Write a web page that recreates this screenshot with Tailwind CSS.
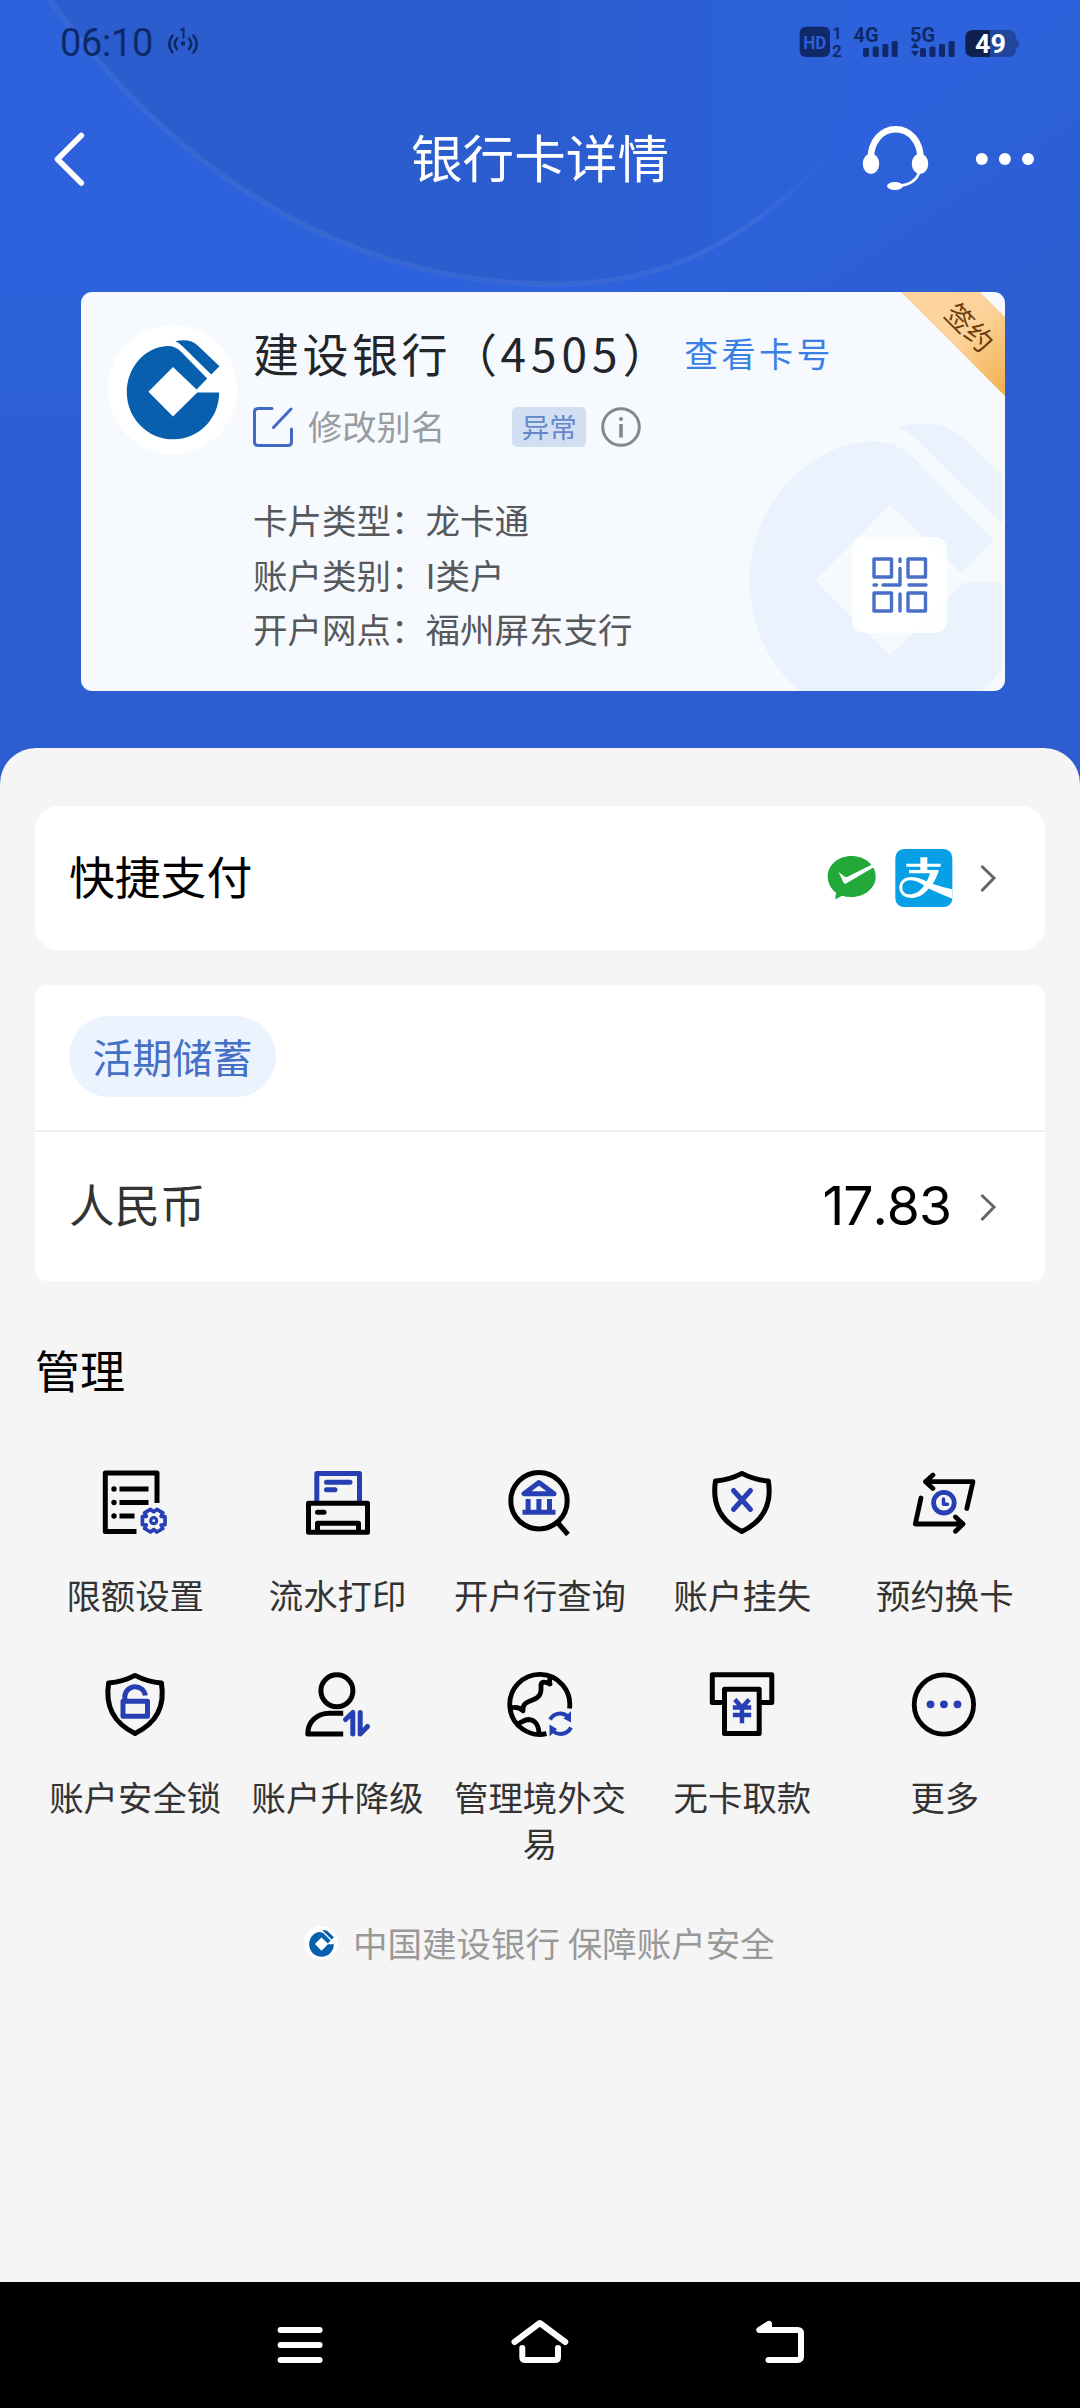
<!DOCTYPE html>
<html lang="zh-CN">
<head>
<meta charset="utf-8">
<title>银行卡详情</title>
<script src="https://cdn.jsdelivr.net/npm/@tailwindcss/browser@4"></script>
</head>
<body class="w-[1080px] h-[2408px] overflow-hidden font-['Noto_Sans_CJK_SC',sans-serif]">
<svg class="hidden">
  <symbol id="ccb" viewBox="196 206 282 304">
    <path d="M476 367H410L337 439L263 365L337 290L408 358L440 325L362 245Q345 227 320 227C252 230 198 292 198 366C198 444 260 508 338 508C414 508 476 446 476 367Z"/>
    <path d="M344 213C370 206 395 209 412 226L477 288L452 313L368 230Q358 218 344 213Z"/>
  </symbol>
</svg>
<div class="relative flex flex-col w-[1080px] h-[2408px] bg-[#2c5fd3]">
  <svg class="absolute left-0 top-0" width="1080" height="800" viewBox="0 0 1080 800">
    <defs>
      <linearGradient id="bg" x1="0" y1="0" x2="0" y2="1"><stop offset="0" stop-color="#2d62dc"/><stop offset=".35" stop-color="#2d62dc"/><stop offset=".7" stop-color="#2c5dd1"/><stop offset="1" stop-color="#2c5dd1"/></linearGradient>
      <linearGradient id="disc" x1="0" y1="0" x2="1" y2="0"><stop offset="0" stop-color="#2b5dcf"/><stop offset=".6" stop-color="#2b5dcf"/><stop offset="1" stop-color="#2d62dc"/></linearGradient>
      <linearGradient id="rightShade" gradientUnits="userSpaceOnUse" x1="860" y1="130" x2="990" y2="330"><stop offset="0" stop-color="#2c5dd1" stop-opacity="0"/><stop offset="1" stop-color="#2c5dd1"/></linearGradient>
      <linearGradient id="rim" x1="0" y1="0" x2="1" y2="0"><stop offset="0" stop-color="#fff" stop-opacity=".06"/><stop offset=".9" stop-color="#fff" stop-opacity=".06"/><stop offset="1" stop-color="#fff" stop-opacity="0"/></linearGradient>
    </defs>
    <rect width="1080" height="800" fill="url(#bg)"/>
    <rect x="540" y="0" width="540" height="800" fill="url(#rightShade)"/>
    <path d="M48 0C180 180 350 286 555 286C660 286 740 250 830 155L870 0Z" fill="url(#disc)"/>
    <path d="M50 0C182 180 352 284 555 284C660 284 740 248 830 155" fill="none" stroke="url(#rim)" stroke-width="5"/>
  </svg>

  <!-- status bar -->
  <div class="relative flex items-center justify-between h-[84px] pl-[59px] pr-[60px]">
    <div class="flex items-center gap-[13px] text-[#0d2a68]">
      <span class="mt-[2px] ml-[1px] font-[Roboto] text-[38px] leading-[40px] tracking-[-0.3px]">06:10</span>
      <svg width="34" height="32" viewBox="166 27 34 32" fill="none" stroke="#0d2a68" stroke-width="2.6" stroke-linecap="round">
        <circle cx="183" cy="44.5" r="2.3" fill="#0d2a68" stroke="none"/>
        <path d="M181 31L183.500 29.500V39" stroke-width="2"/>
        <path d="M177 39.500Q172.500 44.500 177 50M189 39.500Q193.500 44.500 189 50M172.500 36.500Q166 45 172.500 53.500M193.500 36.500Q200 45 193.500 53.500"/>
      </svg>
    </div>
    <div class="flex items-center">
      <svg width="222" height="36" viewBox="799 24 222 36" fill="#10296a">
        <rect x="800.700" y="26.700" width="30.300" height="30.300" rx="6"/>
        <text x="815.800" y="49" text-anchor="middle" textLength="23" lengthAdjust="spacingAndGlyphs" font-family="Roboto" font-weight="700" font-size="19" fill="#2c60d8">HD</text>
        <text x="838" y="39" text-anchor="middle" font-family="Roboto" font-weight="700" font-size="16">1</text>
        <text x="838" y="57" text-anchor="middle" font-family="Roboto" font-weight="700" font-size="17">2</text>
        <text x="854.500" y="41.500" textLength="25" lengthAdjust="spacingAndGlyphs" font-family="Roboto" font-weight="700" font-size="20">4G</text>
        <rect x="864" y="48" width="6" height="9" rx="1.500"/><rect x="873.700" y="46.500" width="6" height="10.500" rx="1.500"/><rect x="883.300" y="44" width="6" height="13" rx="1.500"/><rect x="892.700" y="41" width="6" height="16" rx="1.500"/>
        <text x="911" y="41.500" textLength="25" lengthAdjust="spacingAndGlyphs" font-family="Roboto" font-weight="700" font-size="20">5G</text>
        <path d="M916 42.500L920 48H912ZM916 56.500L920 51H912Z"/>
        <rect x="921" y="48" width="6" height="9" rx="1.500"/><rect x="930.500" y="46.500" width="6" height="10.500" rx="1.500"/><rect x="940" y="44" width="6" height="13" rx="1.500"/><rect x="949.700" y="41" width="6" height="16" rx="1.500"/>
        <path d="M991 30H1009Q1017 30 1017 38V39Q1020 39.500 1020 43.500Q1020 47.500 1017 48V49Q1017 57 1009 57H991Z" fill="#21469c"/>
        <path d="M991 30V57H974Q966.300 57 966.300 49V38Q966.300 30 974 30Z" fill="#0e2050"/>
        <text x="991.500" y="52.800" text-anchor="middle" textLength="31" lengthAdjust="spacingAndGlyphs" font-family="Roboto" font-weight="700" font-size="25.500" fill="#fff">49</text>
      </svg>
    </div>
  </div>

  <!-- title bar -->
  <div class="relative flex items-center justify-between h-[150px] px-[46px]">
    <svg width="180" height="70" viewBox="46 124 180 70" fill="none" stroke="#fff" stroke-width="5.600" stroke-linecap="round" stroke-linejoin="round"><path d="M81.300 135.500L57.500 159.300L81.300 183"/></svg>
    <h1 class="mb-[6px] text-white text-[51.600px] leading-[60px]">银行卡详情</h1>
    <svg width="180" height="70" viewBox="854 124 180 70" fill="#fff">
      <path d="M870.800 158C871 142 881 129.200 895.700 129.200S920.300 142 920.500 158" fill="none" stroke="#fff" stroke-width="6.500"/>
      <ellipse cx="871" cy="163.700" rx="8.200" ry="10.200"/><ellipse cx="920" cy="163.700" rx="8.200" ry="10.200"/>
      <path d="M919 173Q915 184 900 185.700" fill="none" stroke="#fff" stroke-width="2.500"/>
      <ellipse cx="895" cy="186" rx="8" ry="4"/>
      <circle cx="981.800" cy="159" r="6"/><circle cx="1004.900" cy="159" r="6"/><circle cx="1028" cy="159" r="6"/>
    </svg>
  </div>

  <!-- bank card -->
  <section class="relative mt-[58px] w-[924px] h-[399px] ml-[81px] rounded-[11px] overflow-hidden bg-[#f6faff] flex">
    <div class="absolute inset-y-0 left-0 w-[921px] overflow-hidden">
      <svg class="absolute left-[666px] top-[128px] fill-[#eaf2fd]" width="286" height="307"><use href="#ccb"/></svg>
    </div>
    <svg class="absolute right-0 top-0" width="104" height="104" viewBox="0 0 104 104">
      <defs><linearGradient id="gold" x1="0" y1="0" x2="1" y2="1"><stop offset="0" stop-color="#fdd3a0"/><stop offset=".5" stop-color="#fdd39c"/><stop offset="1" stop-color="#f2b04c"/></linearGradient></defs>
      <path d="M0 0H79L104 25V104Z" fill="url(#gold)"/>
      <text transform="translate(67.500 36.500) rotate(45)" text-anchor="middle" y="9" font-size="27.500" fill="#6a3d0c">签约</text>
    </svg>
    <div class="mt-[33px] ml-[27px] size-[129px] shrink-0 rounded-full bg-white flex items-center justify-center">
      <svg class="fill-[#085fae]" width="94" height="101"><use href="#ccb"/></svg>
    </div>
    <div class="ml-[16px] pt-[37px] flex flex-col">
      <div class="flex items-center h-[50px] whitespace-nowrap">
        <span class="mb-[5px] text-[46px] leading-[50px] tracking-[3.500px] text-[#222529]">建设银行（<span class="tracking-[5px]">4505</span>）</span>
        <span class="mb-[2px] ml-[12px] text-[34px] leading-[50px] tracking-[3.500px] text-[#3b7fe6]">查看卡号</span>
      </div>
      <div class="mt-[28px] flex items-center h-[40px]">
        <svg class="-ml-[1px]" width="42" height="42" viewBox="0 0 42 42" fill="none" stroke="#416ac8" stroke-width="3" stroke-linecap="round"><path d="M20 2.500H6Q2.500 2.500 2.500 6V36Q2.500 39.500 6 39.500H36Q39.500 39.500 39.500 36V23M21.500 21.500L39 3"/></svg>
        <span class="mb-[5px] ml-[14px] text-[34.300px] leading-[40px] text-[#999c9f]">修改别名</span>
        <span class="ml-[67px] w-[74px] h-[40px] rounded-[5px] bg-[#d2dff3] text-[27.500px] leading-[38px] text-center text-[#6387c8]">异常</span>
        <svg class="ml-[15px]" width="40" height="40" viewBox="0 0 40 40" fill="none" stroke="#85878a" stroke-width="3"><circle cx="20" cy="20" r="18.300"/><path d="M20 17V30.500" stroke-width="3.600"/><circle cx="20" cy="12" r="2" fill="#85878a" stroke="none"/></svg>
      </div>
      <div class="mt-[45px] text-[34.500px] leading-[54.500px] text-[#56585b] whitespace-nowrap">
        <p>卡片类型：龙卡通</p>
        <p>账户类别：I类户</p>
        <p>开户网点：福州屏东支行</p>
      </div>
    </div>
    <div class="absolute left-[771px] top-[245px] w-[95px] h-[96px] rounded-[12px] bg-white/90 flex items-center justify-center">
      <svg width="56" height="56" viewBox="0 0 56 56" fill="none" stroke="#4a6fc8" stroke-width="3.400" stroke-linecap="round" stroke-linejoin="round">
        <rect x="2" y="2" width="17.500" height="18"/><rect x="36" y="2" width="17.500" height="18"/><rect x="2" y="36" width="17.500" height="18"/><rect x="36" y="36" width="17.500" height="18"/>
        <path d="M28 2V4.500M28 11.500V28H11M2 28H4.500M37 28H54M28 37V54"/>
      </svg>
    </div>
  </section>

  <!-- content sheet -->
  <main class="relative mt-[57px] h-[1534px] rounded-t-[36px] bg-[#f5f5f5] px-[35px] pt-[58px] flex flex-col">
    <section class="h-[144px] shrink-0 rounded-[24px] bg-white pl-[34px] pr-[46px] flex items-center justify-between">
      <span class="mb-[7px] text-[45.800px] leading-[60px] text-black">快捷支付</span>
      <div class="flex items-center">
        <svg width="50" height="60" viewBox="827 848 50 60">
          <path d="M852.500 856C866 856 876.700 865 876.700 876.500S866 897 852.500 897Q847 897 843 895.800Q839 898 836.500 899.300Q835.800 898 837.300 893C832 889 828.700 883 828.700 876.500C828.700 865 839 856 852.500 856Z" fill="#23a93a"/>
          <path d="M839.500 872Q843 874.500 845.500 876.500Q847 877.500 849 876.500L874 864L876 866.500L847 883.500Q845.500 884.300 844.500 882.500Z" fill="#fff"/>
        </svg>
        <svg class="ml-[19px]" width="58" height="58" viewBox="408 207 172 174">
          <rect x="408" y="207" width="171" height="174" rx="26" fill="#07a0e6"/>
          <path d="M483 232H504V277H483ZM441 251H544V260H441ZM449 270H537V280H449Z" fill="#fff"/>
          <path d="M514 272H538C532 293 522 312 509 325C497 340 480 354 458 354C436 354 420 343 420 322C420 302 436 291 456 291C476 291 494 300 515 310Q545 321 579 328V356Q545 343 506 325C488 313 474 301 454 301C438 301 429 309 429 323C429 337 440 344 456 343C476 341 488 327 499 310Q508 295 514 272Z" fill="#fff"/>
        </svg>
        <svg class="ml-[26px]" width="20" height="30" viewBox="0 0 20 30" fill="none" stroke="#666" stroke-width="3"><path d="M2.500 3L15 15L2.500 28"/></svg>
      </div>
    </section>
    <section class="mt-[35px] h-[296px] shrink-0 rounded-[12px] bg-white">
      <div class="h-[147px] pl-[34px] pt-[31px] border-b-2 border-[#efefef]">
        <div class="w-[207px] h-[81px] rounded-full bg-[#ebf3fe] text-center text-[40px] leading-[80px] text-[#4470c6]">活期储蓄</div>
      </div>
      <div class="h-[149px] pl-[34px] pr-[46px] flex items-center justify-between">
        <span class="mb-[8px] text-[45.500px] leading-[60px] text-[#333]">人民币</span>
        <div class="flex items-center">
          <span class="mb-[2px] font-[Inter] text-[53.500px] leading-[60px] tracking-[-1px] [font-kerning:none] text-black">17.83</span>
          <svg class="ml-[28px]" width="20" height="30" viewBox="0 0 20 30" fill="none" stroke="#666" stroke-width="3"><path d="M2.500 3L15 15L2.500 28"/></svg>
        </div>
      </div>
    </section>
    <h2 class="mt-[59px] text-[45px] leading-[60px] text-black">管理</h2>
    <div class="mt-[64px] -mx-[1px] grid grid-cols-5 auto-rows-[202px] text-center text-[34.400px] leading-[46px] text-[#333] [&>div]:flex [&>div]:flex-col [&>div]:items-center [&_span]:mt-[31px] [&_span]:w-[180px]">
      <div>
        <svg width="76" height="76" viewBox="97.500 1464 76 76" fill="none" stroke="#000" stroke-width="5" stroke-linejoin="round">
          <path d="M157.500 1503V1473H105.800V1531.500H137M120 1489H149M120 1502.500H149M120 1516H135"/>
          <g fill="#000" stroke="none"><circle cx="114.500" cy="1489" r="2.700"/><circle cx="114.500" cy="1502.500" r="2.700"/><circle cx="114.500" cy="1516" r="2.700"/></g>
          <g transform="translate(154.200 1520.700)" stroke="#2640b4" stroke-width="3.700"><path d="M11.300 4L7.400 4.300L9.100 7.800L3.200 11.300L0 8.900L-3.200 11.300L-9.100 7.800L-7.400 4.300L-11.300 4V-4L-7.400 -4.300L-9.100 -7.800L-3.200 -11.300L0 -8.900L3.200 -11.300L9.100 -7.800L7.400 -4.300L11.300 -4Z"/><circle r="3" stroke-width="3.200"/></g>
        </svg>
        <span>限额设置</span>
      </div>
      <div>
        <svg width="76" height="76" viewBox="299.500 1464 76 76" fill="none" stroke="#000" stroke-width="5" stroke-linejoin="round">
          <path d="M316.300 1502V1473.500H359V1502M326 1482.300H349.500M326 1489.700H334.500" stroke="#2640b4" stroke-linecap="round"/>
          <path d="M308 1503.200H367V1532.200H308ZM317 1532V1523.200H358V1532"/><path d="M317 1512.300H323.500" stroke-linecap="round"/>
        </svg>
        <span>流水打印</span>
      </div>
      <div>
        <svg width="76" height="76" viewBox="501.500 1464 76 76" fill="none" stroke="#000" stroke-width="5" stroke-linejoin="round">
          <circle cx="538.500" cy="1500.700" r="28.200"/><path d="M557 1522.500L567.500 1534.500"/>
          <path d="M538.400 1482.500L523.500 1493.800H553.500Z" stroke="#2640b4"/><path d="M527.600 1499V1512M538.400 1499V1512M549 1499V1512M522 1512.300H555" stroke="#2640b4"/>
        </svg>
        <span>开户行查询</span>
      </div>
      <div>
        <svg width="76" height="76" viewBox="704.500 1464 76 76" fill="none" stroke="#000" stroke-width="5" stroke-linejoin="round">
          <path id="shield" d="M742.400 1473.400Q730 1480 716 1481C713 1500 717 1519 742.400 1531.500C768 1519 772 1500 768.800 1481Q755 1480 742.400 1473.400Z"/>
          <path d="M734 1490.500L751 1509.500M751 1490.500L734 1509.500" stroke="#2640b4" stroke-linecap="round"/>
        </svg>
        <span>账户挂失</span>
      </div>
      <div>
        <svg width="76" height="76" viewBox="907.500 1464 76 76" fill="none" stroke="#000" stroke-width="4.800" stroke-linejoin="round" stroke-linecap="round">
          <path d="M933.400 1475L926 1481.700L933.400 1488.500M926 1481.700H973.500L967.300 1508.500M921.500 1498L915.800 1524H963.500M956 1517L963.500 1524L956 1531.300"/>
          <circle cx="944.400" cy="1502.700" r="10.300" stroke="#2640b4"/><path d="M944 1499V1504.300H948" stroke="#2640b4" stroke-width="3.500"/>
        </svg>
        <span>预约换卡</span>
      </div>
      <div>
        <svg width="76" height="76" viewBox="97.500 1666 76 76" fill="none" stroke="#000" stroke-width="5" stroke-linejoin="round">
          <use href="#shield" x="-606.900" y="202"/>
          <path d="M123.500 1701.300H148V1716.300H123.500ZM125.300 1701V1697A10.300 10.300 0 0 1 145.800 1695.500" stroke="#2640b4"/>
        </svg>
        <span>账户安全锁</span>
      </div>
      <div>
        <svg width="76" height="76" viewBox="299.500 1666 76 76" fill="none" stroke="#000" stroke-width="5" stroke-linejoin="round">
          <circle cx="336.400" cy="1690.800" r="16"/><path d="M342.700 1713.300H329C316 1713.300 307.300 1722 307.300 1734H342.700"/>
          <path d="M345 1719.500L352.300 1712.500V1734M359.700 1712.500V1734L367 1726.500" stroke="#2640b4" stroke-linecap="round"/>
        </svg>
        <span>账户升降级</span>
      </div>
      <div>
        <svg width="76" height="76" viewBox="501.500 1666 76 76" fill="none" stroke="#000" stroke-width="4.800" stroke-linejoin="round">
          <path d="M569 1708.500A30 30 0 1 0 546 1733.700"/>
          <path d="M551 1677Q548 1679 549.500 1684Q541 1680 540.500 1685C541 1693 540 1697 532 1700C524 1703 522 1705 522.500 1711Q518 1706 510 1708M516 1724C520 1723 523 1720 528 1719.500C536 1720 538 1726 538.700 1734"/>
          <path d="M549.500 1719.500Q553 1713.500 560 1713.500Q564 1713.500 568 1717M570.500 1727.500Q567 1734 560 1734Q556 1734 552 1731" stroke="#2640b4" stroke-width="4"/>
          <path d="M570.500 1711V1722.500L563 1718.500ZM549 1736.500V1724.500L556.500 1729Z" fill="#2640b4" stroke="none"/>
        </svg>
        <span>管理境外交易</span>
      </div>
      <div>
        <svg width="76" height="76" viewBox="704.500 1666 76 76" fill="none" stroke="#000" stroke-width="5" stroke-linejoin="round">
          <path d="M724 1702.500H712.800V1674.800H772.300V1702.500H761M725 1689.200H759.700V1733.500H725Z"/>
          <path d="M735.300 1699.500L742.500 1707.500L749.700 1699.500M742.500 1707V1723.300M733.300 1707.500H751.700M733.300 1715H751.700" stroke="#2640b4" stroke-width="4.400"/>
        </svg>
        <span>无卡取款</span>
      </div>
      <div>
        <svg width="76" height="76" viewBox="907.500 1666 76 76" fill="none" stroke="#000" stroke-width="4.800">
          <circle cx="944.400" cy="1704.500" r="29.700"/>
          <g fill="#2640b4" stroke="none"><circle cx="931" cy="1704.300" r="3.900"/><circle cx="944.400" cy="1704.300" r="3.900"/><circle cx="958" cy="1704.300" r="3.900"/></g>
        </svg>
        <span>更多</span>
      </div>
    </div>
    <div class="mt-[51px] pl-[269px] flex items-center h-[48px]">
      <span class="size-[34px] rounded-full bg-white flex items-center justify-center"><svg class="fill-[#085fae]" width="25" height="27"><use href="#ccb"/></svg></span>
      <span class="mb-[3px] ml-[15px] text-[34.500px] leading-[48px] text-[#999]">中国建设银行 保障账户安全</span>
    </div>
  </main>

  <!-- system navigation -->
  <nav class="relative h-[126px] shrink-0 bg-black flex items-center justify-center gap-[180px]">
    <svg width="60" height="60" viewBox="270 2315 60 60" fill="none" stroke="#fff" stroke-width="6" stroke-linecap="round"><path d="M280.600 2330H319.600M280.600 2345H319.600M280.600 2360H319.600"/></svg>
    <svg width="60" height="60" viewBox="510 2315 60 60" fill="none" stroke="#fff" stroke-width="6" stroke-linecap="round" stroke-linejoin="round"><path d="M514.500 2342L539.800 2323L565.300 2342M522.300 2348V2357Q522.300 2360 525.500 2360H555Q558 2360 558 2357V2348"/></svg>
    <svg width="60" height="60" viewBox="750 2315 60 60" fill="none" stroke="#fff" stroke-width="6" stroke-linecap="round" stroke-linejoin="round"><path d="M769 2324L759.500 2330H797.500Q801 2330 801 2333.500V2356.500Q801 2360 797.500 2360H768.500"/><path d="M769 2324V2330H759.500Z" fill="#fff"/></svg>
  </nav>
</div>
</body>
</html>
